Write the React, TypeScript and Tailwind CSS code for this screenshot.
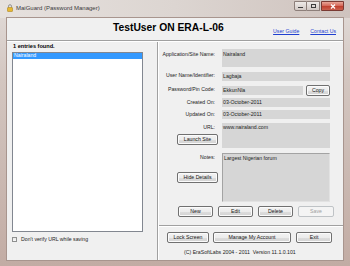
import React from "react";

type BtnProps = { w: string; children: React.ReactNode; disabled?: boolean; className?: string };

function Btn({ w, children, disabled, className = "" }: BtnProps) {
  return (
    <div
      className={`h-[11px] ${w} flex items-center justify-center rounded-[2px] border text-[5.2px] leading-none ${
        disabled
          ? "border-[#bfc3c6] text-[#a0a0a0] bg-[#f4f4f4]"
          : "border-[#707070] text-[#151515] bg-[linear-gradient(#f3f3f3_0%,#ececec_50%,#dedede_51%,#d2d2d2_100%)] shadow-[inset_0_0_0_1px_#fbfbfb]"
      } ${className}`}
    >
      {children}
    </div>
  );
}

function Label({ children, pt }: { children: React.ReactNode; pt: string }) {
  return <div className={`${pt} pr-[2px] text-right text-[5.2px] leading-none text-[#1c1c1c] whitespace-nowrap`}>{children}</div>;
}

export default function App() {
  return (
    <div
      className="w-[350px] h-[266px] flex flex-col overflow-hidden bg-[linear-gradient(180deg,#e2dcd9_0%,#d3c6c0_30%,#c2aca4_100%)]"
      style={{ fontFamily: '"Liberation Sans", Arial, sans-serif' }}
    >
      {/* Title bar */}
      <div className="h-[18px] flex items-start bg-[linear-gradient(90deg,#e6e1de_0%,#dcd5d1_50%,#cfc3be_100%)]">
        <svg className="ml-[7px] mt-[4px]" width="6" height="8" viewBox="0 0 6 8">
          <path d="M1.5 3.5 V2.2 a1.5 1.5 0 0 1 3 0 V3.5" fill="none" stroke="#8a8a8a" strokeWidth="0.9" />
          <rect x="0.5" y="3.5" width="5" height="4" rx="0.5" fill="#e8b830" stroke="#a37a10" strokeWidth="0.5" />
        </svg>
        <span className="ml-[3px] mt-[5px] text-[6px] leading-none text-[#3a3a3a] whitespace-nowrap">MaiGuard (Password Manager)</span>
        <div className="ml-auto mr-[6px] mt-[1px] flex h-[10px]">
          <div className="w-[13px] h-[10px] border border-[#8d7f7a] rounded-bl-[2px] bg-[linear-gradient(#eeeae8,#d2c9c5)] flex items-end justify-center pb-[2px]">
            <div className="w-[5px] h-[1.5px] bg-[#3d3d3d]" />
          </div>
          <div className="w-[13px] h-[10px] border border-l-0 border-[#8d7f7a] bg-[linear-gradient(#eeeae8,#d2c9c5)] flex items-center justify-center">
            <div className="w-[5px] h-[4px] border border-t-[1.5px] border-[#3d3d3d]" />
          </div>
          <div className="w-[23px] h-[10px] ml-[1px] border border-[#7a3a33] rounded-br-[2px] bg-[linear-gradient(#e9a596_0%,#d46b5c_45%,#c0412f_55%,#c9604e_100%)] flex items-center justify-center">
            <svg width="6" height="5" viewBox="0 0 6 5">
              <path d="M1 0.5 L5 4.5 M5 0.5 L1 4.5" stroke="#fff" strokeWidth="1.3" />
            </svg>
          </div>
        </div>
      </div>

      {/* Frame + client */}
      <div className="flex-1 px-[7px] pb-[6px] flex">
        <div className="flex-1 bg-[#f0f0f0] flex flex-col text-[#1c1c1c] shadow-[0_0_0_1px_#a8958e]">
          {/* Header */}
          <div className="h-[22px] flex items-start">
            <div className="pl-[106px] pt-[5px] text-[10.3px] font-bold leading-none text-black whitespace-nowrap">TestUser ON ERA-L-06</div>
            <div className="ml-auto pr-[7px] pt-[11px] flex gap-[11px] text-[5.2px] leading-none text-[#1f3fd0] underline whitespace-nowrap">
              <span>User Guide</span>
              <span>Contact Us</span>
            </div>
          </div>
          <div className="h-[2px] border-t border-[#a0a0a0] bg-white" />

          {/* Body */}
          <div className="flex-1 flex">
            {/* Left */}
            <div className="w-[151px] border-r border-[#a0a0a0] flex flex-col pl-[5px]">
              <div className="pl-[1px] pt-[2px] h-[8px] text-[5.6px] font-bold leading-none text-black">1 entries found.</div>
              <div className="mt-[2px] w-[131px] h-[180px] border border-[#828790] bg-white">
                <div className="h-[6px] bg-[#3399ff] text-white text-[5.2px] leading-none flex items-center pl-[1px]">Nairaland</div>
              </div>
              <div className="mt-[5px] flex items-center">
                <div className="w-[5px] h-[5px] border border-[#8e8f8f] bg-[linear-gradient(#e6e6e6,#fafafa)]" />
                <span className="ml-[4px] text-[5.2px] leading-none whitespace-nowrap">Don't verify URL while saving</span>
              </div>
            </div>

            {/* Right */}
            <div className="flex-1 flex flex-col border-l border-white">
              {/* App name */}
              <div className="mt-[7px] flex">
                <div className="w-[58px]"><Label pt="pt-[3px]">Application/Site Name:</Label></div>
                <div className="ml-[5px] w-[108px] h-[18px] bg-[#d6d6d6] pl-[1px] pt-[3px] text-[5.2px] leading-none">Nairaland</div>
              </div>
              {/* User */}
              <div className="mt-[5px] flex">
                <div className="w-[58px]"><Label pt="pt-[1px]">User Name/Identifier:</Label></div>
                <div className="ml-[5px] w-[108px] h-[9px] bg-[#d6d6d6] pl-[1px] flex items-center text-[5.2px] leading-none">Lagbaja</div>
              </div>
              {/* Password */}
              <div className="mt-[5px] flex">
                <div className="w-[58px]"><Label pt="pt-[1px]">Password/Pin Code:</Label></div>
                <div className="ml-[5px] w-[81px] h-[9px] bg-[#d6d6d6] pl-[1px] flex items-center text-[5.2px] leading-none">EkkunNla</div>
                <Btn w="w-[24px]" className="ml-[3px] -my-[1px]">Copy</Btn>
              </div>
              {/* Created */}
              <div className="mt-[3px] flex">
                <div className="w-[58px]"><Label pt="pt-[2px]">Created On:</Label></div>
                <div className="ml-[5px] w-[108px] h-[9px] bg-[#d6d6d6] pl-[1px] flex items-center text-[5.2px] leading-none">03-October-2011</div>
              </div>
              {/* Updated */}
              <div className="mt-[3px] flex">
                <div className="w-[58px]"><Label pt="pt-[2px]">Updated On:</Label></div>
                <div className="ml-[5px] w-[108px] h-[9px] bg-[#d6d6d6] pl-[1px] flex items-center text-[5.2px] leading-none">03-October-2011</div>
              </div>
              {/* URL */}
              <div className="mt-[4px] flex">
                <div className="w-[58px] flex flex-col items-end">
                  <Label pt="pt-[2px]">URL:</Label>
                  <Btn w="w-[41px]" className="mt-[4px] -mr-[1px]">Launch Site</Btn>
                </div>
                <div className="ml-[5px] w-[108px] h-[25px] bg-[#d6d6d6] pl-[1px] pt-[2px] text-[5.2px] leading-none">www.nairaland.com</div>
              </div>
              {/* Notes */}
              <div className="mt-[5px] flex">
                <div className="w-[58px] flex flex-col items-end">
                  <Label pt="pt-[2px]">Notes:</Label>
                  <Btn w="w-[41px]" className="mt-[12px] -mr-[1px]">Hide Details</Btn>
                </div>
                <div className="ml-[5px] w-[108px] h-[49px] bg-[#d6d6d6] border border-[#a3a3a3] border-r-[#e2e2e2] border-b-[#e2e2e2] pl-[1px] pt-[2px] text-[5.2px] leading-none">Largest Nigerian forum</div>
              </div>
              {/* Action buttons */}
              <div className="mt-[4px] pl-[19px] flex gap-[5px]">
                <Btn w="w-[35px]">New</Btn>
                <Btn w="w-[35px]">Edit</Btn>
                <Btn w="w-[35px]">Delete</Btn>
                <Btn w="w-[36px]" disabled>Save</Btn>
              </div>
              {/* Separator */}
              <div className="mt-[8px] h-[2px] border-t border-[#a0a0a0] bg-white" />
              {/* Bottom buttons */}
              <div className="mt-[5px] pl-[8px] flex">
                <Btn w="w-[42px]">Lock Screen</Btn>
                <Btn w="w-[78px]" className="ml-[4px]">Manage My Account</Btn>
                <Btn w="w-[36px]" className="ml-[5px]">Exit</Btn>
              </div>
              <div className="mt-[7px] pl-[25px] text-[5.2px] leading-none whitespace-pre">(C) EraSoftLabs 2004 - 2011  Version 11.1.0.101</div>
            </div>
          </div>
        </div>
      </div>
    </div>
  );
}
